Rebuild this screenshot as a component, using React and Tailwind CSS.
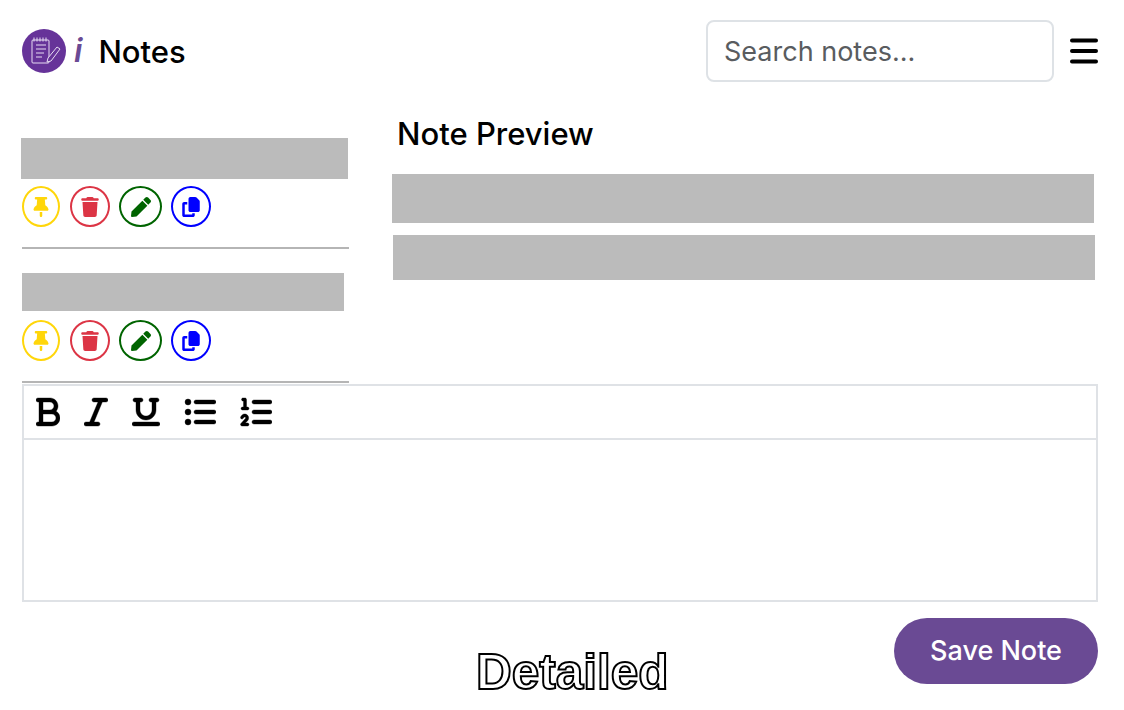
import { FaPen } from "react-icons/fa";
import { FaThumbtack, FaTrash, FaCopy, FaBold, FaItalic, FaUnderline, FaListUl, FaListOl } from "react-icons/fa6";

const Logo = () => (
    <svg width="44" height="44" viewBox="0 0 44 44" className="shrink-0">
        <circle cx="22" cy="22" r="22" fill="#663399" />
        <g fill="none" stroke="#e6dcf2" strokeWidth="1">
            <rect x="10" y="11" width="17" height="23" rx="1" />
            <path d="M12 8.5v4M15 8.5v4M18 8.5v4M21 8.5v4M24 8.5v4" />
            <path d="M14 16h10M14 20h10M14 24h8M14 28h6" />
            <path d="M25 33l1-4 9-11 3 2-9 12z" fill="#663399" />
        </g>
    </svg>
);

const CircleBtn = ({ className, children }) => (
    <button className={`h-[41px] rounded-[50%] border-2 flex items-center justify-center text-[20px] ${className}`}>
        {children}
    </button>
);

const NoteActions = () => (
    <div className="flex gap-[9px] ml-[1px]">
        <CircleBtn className="w-[38px] mr-[1px] border-[#ffd60a] text-[#ffd60a]"><FaThumbtack /></CircleBtn>
        <CircleBtn className="w-[40px] border-[#dc3545] text-[#dc3545]"><FaTrash /></CircleBtn>
        <CircleBtn className="w-[43px] border-[#006400] text-[#006400]"><FaPen /></CircleBtn>
        <CircleBtn className="w-[40px] border-[#0000ff] text-[#0000ff]"><FaCopy /></CircleBtn>
    </div>
);

const App = () => {
    return (
        <div className="w-[1124px] h-[710px] bg-white text-black overflow-hidden relative font-['Inter',sans-serif]">

            <header className="h-[102px] pl-[22px] pr-[26px] flex items-center">
                <Logo />
                <i className="ml-[8px] text-[32px] font-semibold text-[#6a4a94]">i</i>
                <span className="ml-[16px] text-[31px] font-medium leading-none">Notes</span>

                <input
                    placeholder="Search notes..."
                    className="ml-auto w-[348px] h-[62px] px-[16px] border-2 border-[#dee2e6] rounded-[8px] text-[27px] outline-none placeholder:text-[#595c5f]"
                />
                <svg width="28" height="26" viewBox="0 0 28 26" className="ml-[16px]">
                    <path d="M2 2.5h24M2 13h24M2 23.500h24" stroke="black" strokeWidth="4" strokeLinecap="round" />
                </svg>
            </header>

            <main className="h-[282px] flex items-start">

                <div className="w-[328px] ml-[21px] pt-[36px]">
                    <div className="h-[41px] w-[327px] bg-[#bbbbbb]"></div>
                    <div className="mt-[7px]"><NoteActions /></div>
                    <hr className="mt-[20px] ml-[1px] border-t-2 border-[#b5b5b5]" />

                    <div className="mt-[24px] ml-[1px] h-[38px] w-[322px] bg-[#bbbbbb]"></div>
                    <div className="mt-[9px]"><NoteActions /></div>
                    <hr className="mt-[20px] ml-[1px] border-t-2 border-[#b5b5b5]" />
                </div>

                <div className="ml-[43px] w-[704px]">
                    <h2 className="ml-[5px] mt-[14px] text-[31px] font-medium leading-[36px]">Note Preview</h2>
                    <div className="mt-[22px] h-[49px] w-[702px] bg-[#bbbbbb]"></div>
                    <div className="mt-[12px] ml-[1px] h-[45px] w-[702px] bg-[#bbbbbb]"></div>
                </div>

            </main>

            <section className="ml-[22px] w-[1076px] h-[218px] border-2 border-[#dfe2e6]">
                <div className="h-[54px] pl-[12px] border-b-2 border-[#dfe2e6] flex items-center gap-[24px] text-[32px]">
                    <FaBold className="w-[24px] stroke-[6]" />
                    <FaItalic className="w-[24px] stroke-[6]" />
                    <FaUnderline className="w-[28px] stroke-[6]" />
                    <FaListUl className="stroke-[6]" />
                    <FaListOl className="stroke-[6]" />
                </div>
            </section>

            <div className="mt-[16px] pr-[26px] flex justify-end">
                <button className="w-[204px] h-[66px] pt-[1px] rounded-full bg-[#6a4a94] text-white text-[27px] font-medium">
                    Save Note
                </button>
            </div>

            {/* label sits on top of the footer row */}
            <div className="absolute left-[476px] top-[640px] text-[49.500px] leading-[64px] font-bold text-white [-webkit-text-stroke:2px_black] font-['Liberation_Sans',sans-serif]">
                Detailed
            </div>

        </div>
    );
};

export default App;
